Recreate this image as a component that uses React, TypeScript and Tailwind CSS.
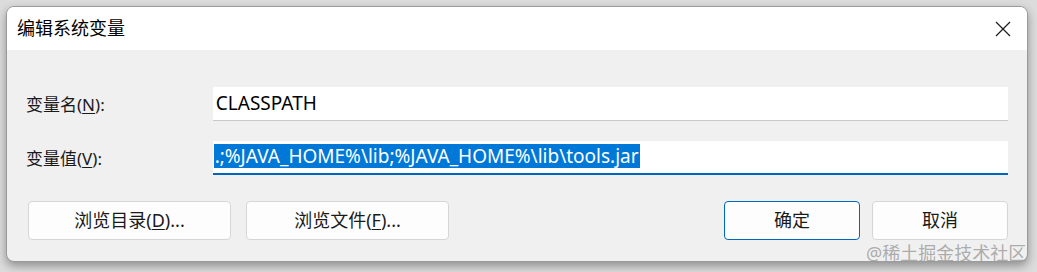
import React from "react";

const font = { fontFamily: '"Noto Sans", "Noto Sans CJK SC", sans-serif' };

function Btn({ children, primary, w }: { children: React.ReactNode; primary?: boolean; w: string }) {
  return (
    <button
      className={`${w} h-[39px] rounded-[4px] bg-[#fdfdfd] text-[18px] text-[#1a1a1a] flex items-center justify-center ${
        primary ? "border border-[#0067c0]" : "border border-[#d6d6d6]"
      }`}
    >
      {children}
    </button>
  );
}

export default function App() {
  return (
    <div className="w-[1037px] h-[272px] bg-[#dcdcdc] overflow-hidden relative" style={font}>
      <div className="pt-[6px] pl-[6px]">
        <div className="w-[1022px] h-[256px] rounded-[8px] border border-[#9a9a9a] bg-[#f0f0f0] overflow-hidden flex flex-col shadow-[0_4px_10px_rgba(0,0,0,0.35)]">
          <div className="h-[43px] bg-white flex items-center justify-between pl-[10px] pr-[15px]">
            <span className="text-[18px] text-black">编辑系统变量</span>
            <svg width="16" height="16" viewBox="0 0 16 16" className="mr-[1px]">
              <path d="M1 1 L15 15 M15 1 L1 15" stroke="#1a1a1a" strokeWidth="1.2" fill="none" />
            </svg>
          </div>
          <div className="flex flex-col pt-[37px] pl-[19px] pr-[19px]">
            <div className="flex items-center h-[34px]">
              <span className="w-[187px] text-[17px] text-[#1a1a1a] pt-[2px]">
                变量名(<span className="underline underline-offset-2">N</span>):
              </span>
              <div className="w-[796px] h-[34px] bg-white border-b border-[#c8c8c8] flex items-center pl-[3px]">
                <span className="text-[19px] text-black">CLASSPATH</span>
              </div>
            </div>
            <div className="flex items-center h-[34px] mt-[20px]">
              <span className="w-[187px] text-[17px] text-[#1a1a1a] pt-[2px]">
                变量值(<span className="underline underline-offset-2">V</span>):
              </span>
              <div className="w-[797px] h-[34px] bg-white border-b-[2px] border-[#0067c0] flex items-center pl-[1px] pb-[2px]">
                <span className="text-[19px] text-white bg-[#0078d7] h-[24px] leading-[24px] px-[1px]">
                  .;%JAVA_HOME%\lib;%JAVA_HOME%\lib\tools.jar
                </span>
              </div>
            </div>
            <div className="flex items-center mt-[26px] pl-[2px]">
              <Btn w="w-[203px]">
                <span>
                  浏览目录(<span className="underline underline-offset-2">D</span>)...
                </span>
              </Btn>
              <div className="w-[15px]" />
              <Btn w="w-[203px]">
                <span>
                  浏览文件(<span className="underline underline-offset-2">F</span>)...
                </span>
              </Btn>
              <div className="flex-1" />
              <Btn w="w-[136px]" primary>
                确定
              </Btn>
              <div className="w-[12px]" />
              <Btn w="w-[136px]">取消</Btn>
            </div>
          </div>
        </div>
      </div>
      <div className="absolute left-[866px] top-[240px] text-[18px] text-[#9a9a9a]/80">
        @稀土掘金技术社区
      </div>
    </div>
  );
}
